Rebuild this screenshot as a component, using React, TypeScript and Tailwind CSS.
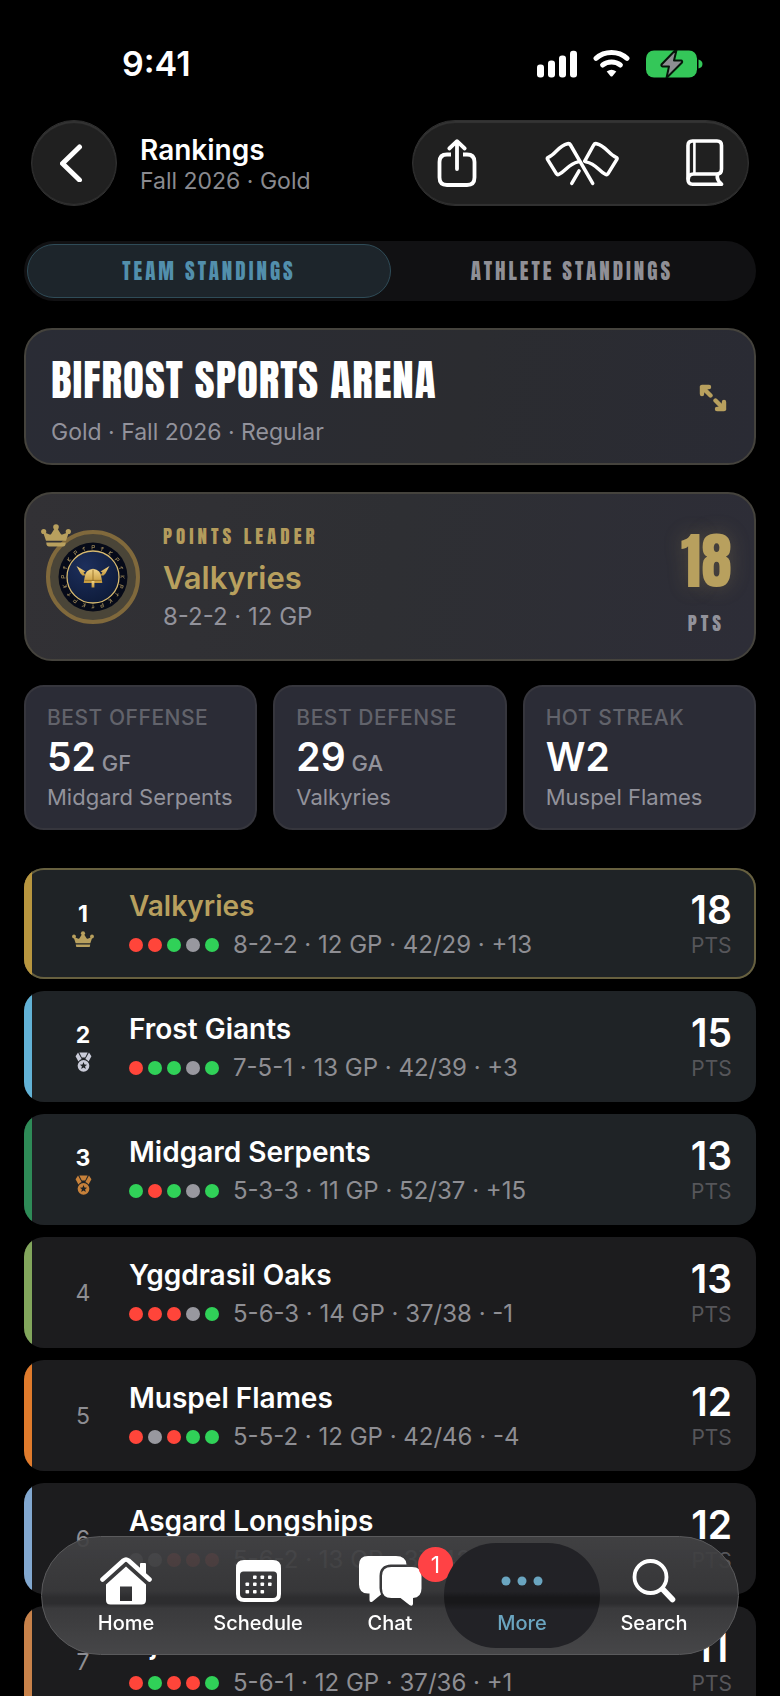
import type { ReactNode } from "react";

type Result = "W" | "L" | "T";

type Team = {
  rank: number;
  name: string;
  form: Result[];
  record: string;
  points: number;
  strip: string;
};

const teams: Team[] = [
  { rank: 1, name: "Valkyries", form: ["L", "L", "W", "T", "W"], record: "8-2-2 · 12 GP · 42/29 · +13", points: 18, strip: "bg-[#b8963f]" },
  { rank: 2, name: "Frost Giants", form: ["L", "W", "W", "T", "W"], record: "7-5-1 · 13 GP · 42/39 · +3", points: 15, strip: "bg-[#62b2d6]" },
  { rank: 3, name: "Midgard Serpents", form: ["W", "L", "W", "T", "W"], record: "5-3-3 · 11 GP · 52/37 · +15", points: 13, strip: "bg-[#2e8b57]" },
  { rank: 4, name: "Yggdrasil Oaks", form: ["L", "L", "L", "T", "W"], record: "5-6-3 · 14 GP · 37/38 · -1", points: 13, strip: "bg-[#82a65c]" },
  { rank: 5, name: "Muspel Flames", form: ["L", "T", "L", "W", "W"], record: "5-5-2 · 12 GP · 42/46 · -4", points: 12, strip: "bg-[#e07b2c]" },
  { rank: 6, name: "Asgard Longships", form: ["T", "T", "L", "L", "L"], record: "5-6-2 · 13 GP · 37/42 · -5", points: 12, strip: "bg-[#82a8d0]" },
  { rank: 7, name: "Njord Raiders", form: ["L", "W", "L", "L", "W"], record: "5-6-1 · 12 GP · 37/36 · +1", points: 11, strip: "bg-[#c8824a]" },
];

const stats = [
  { label: "BEST OFFENSE", value: "52", unit: "GF", team: "Midgard Serpents" },
  { label: "BEST DEFENSE", value: "29", unit: "GA", team: "Valkyries" },
  { label: "HOT STREAK", value: "W2", unit: "", team: "Muspel Flames" },
];

const resultColor: Record<Result, string> = {
  W: "bg-[#30d158]",
  L: "bg-[#ff453a]",
  T: "bg-[#98989f]",
};

function Crown({ className }: { className: string }) {
  return (
    <svg viewBox="0 0 30 23" className={className} fill="currentColor" aria-hidden="true">
      <circle cx="15" cy="3" r="2.8" />
      <circle cx="2.7" cy="7.5" r="2.6" />
      <circle cx="27.3" cy="7.5" r="2.6" />
      <path d="M2 8 L8.6 10.5 Q9.6 10.9 10.2 10 L13.6 4.5 H16.4 L19.8 10 Q20.4 10.9 21.4 10.5 L28 8 L25 16.8 H5 Z" />
      <path d="M5.2 18.4 H24.8 L24.4 20.8 Q24 22.6 22.2 22.6 H7.8 Q6 22.6 5.6 20.8 Z" />
    </svg>
  );
}

function Medal({ className }: { className: string }) {
  return (
    <svg viewBox="0 0 18 21" className={className} aria-hidden="true">
      <path d="M0.6 4.4 L3.2 0.6 L7 7.4 Q5 8.4 3.6 10 Z" fill="currentColor" />
      <path d="M17.4 4.4 L14.8 0.6 L11 7.4 Q13 8.4 14.4 10 Z" fill="currentColor" />
      <path d="M4.6 0.4 H13.4 L10.8 5.8 H7.2 Z" fill="currentColor" />
      <circle cx="9" cy="14.6" r="6.2" fill="currentColor" />
      <path d="M9 10.6 L10.1 13.2 L12.8 13.4 L10.7 15.2 L11.4 17.9 L9 16.4 L6.6 17.9 L7.3 15.2 L5.2 13.4 L7.9 13.2 Z" fill="#1f2326" />
    </svg>
  );
}

function TeamCrest() {
  const ticks = Array.from({ length: 20 }, (_, i) => i * 18);
  return (
    <svg viewBox="0 0 94 94" className="size-[94px]" role="img" aria-label="Valkyries crest">
      <defs>
        <linearGradient id="helm" x1="0" y1="0" x2="0" y2="1">
          <stop offset="0" stopColor="#f3d589" />
          <stop offset="1" stopColor="#c4983c" />
        </linearGradient>
        <radialGradient id="night" cx="0.35" cy="0.3" r="0.8">
          <stop offset="0" stopColor="#1d2f5c" />
          <stop offset="1" stopColor="#0d1a38" />
        </radialGradient>
      </defs>
      <circle cx="47" cy="47" r="45" fill="#4a4538" stroke="#80693c" strokeWidth="4" />
      <circle cx="47" cy="47" r="34.5" fill="#060a18" />
      <circle cx="47" cy="47" r="26" fill="url(#night)" stroke="#d9bb70" strokeWidth="1.3" />
      {ticks.map((angle, i) => (
        <path
          key={angle}
          d={i % 3 === 0 ? "M46 15.5 V19.5 M46 15.5 H48.5 V17.5 H46" : i % 3 === 1 ? "M47 15.5 V19.5 M45.5 17 L48.5 16" : "M46 15.5 V19.5 M48.5 15.5 L46 17.5 L48 19.5"}
          transform={`rotate(${angle} 47 47)`}
          stroke="#8f7c52"
          strokeWidth="0.8"
          fill="none"
        />
      ))}
      <g fill="url(#helm)">
        <path d="M38.5 48 Q39 39.6 47 38.8 Q55 39.6 55.5 48 L56.3 53 H37.7 Z" />
        <path d="M30.5 36 L39.5 41.5 L37.5 42.5 L39.5 45.5 L36.5 45.5 L34.5 43.5 Z" />
        <path d="M63.5 36 L54.5 41.5 L56.5 42.5 L54.5 45.5 L57.5 45.5 L59.5 43.5 Z" />
        <path d="M45.6 51 H48.4 V57.5 H45.6 Z" />
      </g>
      <path d="M47 39.5 V51 M38.4 50.4 H55.6" stroke="#8f6b25" strokeWidth="0.8" />
    </svg>
  );
}

function StatusBar() {
  return (
    <div className="flex items-center justify-between pt-[42px] pr-[77px] pb-[34px] pl-[122px]">
      <span className="text-[34px] leading-[44px] font-semibold">9:41</span>
      <div className="flex items-center gap-4">
        <svg width="40" height="28" viewBox="0 0 40 28" fill="#fff" aria-label="Signal" role="img">
          <rect x="0" y="14.5" width="7" height="13" rx="3" />
          <rect x="11" y="10.5" width="7" height="17" rx="3" />
          <rect x="22" y="5.5" width="7" height="22" rx="3" />
          <rect x="33" y="0.8" width="7" height="26.7" rx="3" />
        </svg>
        <svg width="37" height="28" viewBox="0 0 37 28" fill="none" stroke="#fff" strokeWidth="5" strokeLinecap="round" aria-label="Wi-Fi" role="img">
          <path d="M3 8.4 Q9.5 2.6 18.5 2.6 Q27.5 2.6 34 8.4" />
          <path d="M9.6 15 Q13.4 12 18.5 12 Q23.6 12 27.4 15" />
          <path d="M13.7 21.6 Q18.5 18 23.3 21.6 L19.6 26 Q18.5 27 17.4 26 Z" fill="#fff" stroke="none" />
        </svg>
        <svg width="57" height="28" viewBox="0 0 57 28" aria-label="Battery charging" role="img">
          <rect x="0" y="0.5" width="51" height="27" rx="8" fill="#34c759" />
          <path d="M52.5 9.5 Q56.5 10.5 56.5 14 Q56.5 17.5 52.5 18.5 Z" fill="#34c759" />
          <path d="M29.5 0 L15.5 14.5 Q15 16.2 16.6 16.4 H23 L20.5 28 L36 12.5 Q36.6 10.8 35 10.6 H28 L30.5 0 Z" fill="#8e8e93" stroke="#06160a" strokeWidth="2" strokeLinejoin="round" />
        </svg>
      </div>
    </div>
  );
}

function Header() {
  const glass = "border border-[#303030] bg-[#202020] shadow-[inset_0_2px_1px_#343434,inset_0_-1px_1px_#333]";
  return (
    <header className="flex items-center justify-between px-[7px]">
      <div className="flex items-center gap-[23px]">
        <button type="button" aria-label="Back" className={`flex size-[86px] items-center justify-center rounded-full pr-1 ${glass}`}>
          <svg width="24" height="38" viewBox="0 0 24 38" fill="none" stroke="#fff" strokeWidth="5" strokeLinecap="round" strokeLinejoin="round">
            <path d="M19.5 3 L2.5 19.5 L19.5 36" />
          </svg>
        </button>
        <div className="pt-1">
          <h1 className="text-[28px] leading-8 font-semibold">Rankings</h1>
          <p className="text-[23px] leading-[30px] text-[#8a8a8f]">Fall 2026 · Gold</p>
        </div>
      </div>
      <div className={`flex h-[86px] w-[337px] items-center justify-between rounded-full px-[24px] ${glass}`}>
        <button type="button" aria-label="Share">
          <svg width="40" height="50" viewBox="0 0 40 50" fill="none" stroke="#fff" strokeWidth="3.8" strokeLinecap="round" strokeLinejoin="round">
            <path d="M14 16.5 H10 Q2.5 16.5 2.5 24 V39.5 Q2.5 47 10 47 H30 Q37.5 47 37.5 39.5 V24 Q37.5 16.5 30 16.5 H26" strokeLinecap="butt" />
            <path d="M20 31 V3.5 M12.3 10.5 L20 3.2 L27.7 10.5" />
          </svg>
        </button>
        <button type="button" aria-label="Teams">
          <svg width="74" height="45" viewBox="0 0 76 46" fill="none" stroke="#fff" strokeWidth="3.6" strokeLinecap="round" strokeLinejoin="round">
            <path d="M49 43.5 L26.2 4 Q25.2 2.2 23.2 2.7 C13.5 5 11 13.5 3.4 16.6 Q1.8 17.4 2.6 18.8 L11.8 33.6 Q12.8 35 14.4 34 C22 30.4 24 23.5 34 21.3" />
            <path d="M27.5 43.5 L35 30.6" />
            <path d="M40.8 20.6 L50 4 Q51 2.2 53 2.7 C62.5 5 65.5 13.5 73 16.6 Q74.6 17.4 73.8 18.8 L64.6 33.6 Q63.6 35 62 34 C54.5 30.4 53 23.5 42 21.3" />
          </svg>
        </button>
        <button type="button" aria-label="Rules">
          <svg width="38" height="48" viewBox="0 0 38 48" fill="none" stroke="#fff" strokeWidth="3.6" strokeLinecap="round" strokeLinejoin="round">
            <path d="M35.5 45.2 H6.5 Q2 45.2 2 40.5 V6.5 Q2 2 6.5 2 H31 Q35.5 2 35.5 6.5 V30 Q35.5 34.5 32 35 Q29.5 40 35.5 45.2" />
            <path d="M8.4 3 V34" strokeWidth="2.6" />
            <path d="M2.4 39.5 Q2.6 35 7.5 35 H32" />
          </svg>
        </button>
      </div>
    </header>
  );
}

function RankMark({ rank }: { rank: number }) {
  if (rank > 3) {
    return <span className="text-[23px] leading-7 text-[#8e8e93]">{rank}</span>;
  }
  return (
    <>
      <span className="text-[23px] leading-7 font-bold">{rank}</span>
      {rank === 1 && <Crown className="mt-[3px] w-[22px] text-[#b8a05e]" />}
      {rank === 2 && <Medal className="mt-[3px] w-[17px] text-[#c9cbd8]" />}
      {rank === 3 && <Medal className="mt-[3px] w-[17px] text-[#c7813a]" />}
    </>
  );
}

function TeamRow({ team }: { team: Team }) {
  const surface =
    team.rank === 1
      ? "bg-[#1f2326] ring-2 ring-inset ring-[#67603f]"
      : team.rank <= 3
        ? "bg-[#1f2326]"
        : "bg-[#1c1c1e]";
  return (
    <li className={`flex h-[111px] shrink-0 overflow-hidden rounded-[20px] ${surface}`}>
      <div className={`w-2 shrink-0 ${team.strip}`} />
      <div className="flex w-[102px] shrink-0 flex-col items-center justify-center">
        <RankMark rank={team.rank} />
      </div>
      <div className="-ml-[5px] min-w-0 flex-1 pt-5">
        <h3 className={`text-[28px] leading-9 font-semibold ${team.rank === 1 ? "text-[#b8a05e]" : ""}`}>{team.name}</h3>
        <div className="mt-1 flex items-center">
          <div className="flex gap-[5px]">
            {team.form.map((result, i) => (
              <span key={i} className={`size-[14px] rounded-full ${resultColor[result]}`} />
            ))}
          </div>
          <p className="ml-[14px] text-2xl leading-[34px] text-[#8e8e93]">{team.record}</p>
        </div>
      </div>
      <div className="flex flex-col items-center pt-5 pr-6">
        <span className="text-[39px] leading-[44px] font-semibold">{team.points}</span>
        <span className="text-[21px] leading-7 text-[#56565a]">PTS</span>
      </div>
    </li>
  );
}

function Tab({ label, active, badge, children }: { label: string; active?: boolean; badge?: number; children: ReactNode }) {
  return (
    <button
      type="button"
      aria-current={active ? "page" : undefined}
      className={`relative flex h-[105px] flex-1 flex-col items-center justify-end pb-[13px] ${active ? "text-[#6aa5c0]" : "text-white"}`}
    >
      {active && <span className="absolute -inset-x-3 inset-y-0 rounded-[52px] bg-[linear-gradient(#222226_46%,#18181a_52%,#18181a_57%,#222226_64%)]" />}
      <span className="relative flex h-12 items-center justify-center">{children}</span>
      <span className="relative mt-[6px] text-xl leading-6 font-medium">{label}</span>
      {badge && (
        <span className="absolute top-1 left-[94px] flex size-[35px] items-center justify-center rounded-full bg-[#ff4245] text-[23px] leading-7">
          {badge}
        </span>
      )}
    </button>
  );
}

function TabBar() {
  return (
    <nav className="fixed inset-x-[41px] bottom-[41px] flex items-center rounded-full border border-[#5a5a5c] bg-[linear-gradient(#434345ec_0%,#39393bf2_46%,#2d2d2f_52%,#2d2d2f_57%,#3a3a3c_61%,#464648_100%)] px-[18px] py-[6px]">
      <Tab label="Home">
        <svg width="54" height="48" viewBox="0 0 54 48" fill="currentColor">
          <path d="M3.5 22.5 L24.5 3.5 Q27 1.5 29.5 3.5 L50.5 22.5" fill="none" stroke="currentColor" strokeWidth="4.6" strokeLinecap="round" strokeLinejoin="round" />
          <path d="M41 7 Q41 6 42 6 H46 Q47 6 47 7 V18 L41 12.5 Z" />
          <path d="M27 9.5 L47 27.5 V43 Q47 47.5 42.5 47.5 H11.5 Q7 47.5 7 43 V27.5 Z M21 29.5 V44 H33 V29.5 Z" fillRule="evenodd" />
        </svg>
      </Tab>
      <Tab label="Schedule">
        <svg width="45" height="42" viewBox="0 0 45 42" fill="currentColor">
          <path d="M8 0 H37 Q45 0 45 8 V34 Q45 42 37 42 H8 Q0 42 0 34 V8 Q0 0 8 0 Z M7.5 11.5 Q4 11.5 4 15 V34 Q4 38 8 38 H37 Q41 38 41 34 V15 Q41 11.5 37.5 11.5 Z" fillRule="evenodd" />
          {[
            [17, 15.5], [24.5, 15.5], [32, 15.5],
            [9.5, 22.5], [17, 22.5], [24.5, 22.5], [32, 22.5],
            [9.5, 30], [17, 30], [24.5, 30],
          ].map(([x, y]) => (
            <rect key={`${x}-${y}`} x={x} y={y} width="3.6" height="3.6" rx="0.8" />
          ))}
        </svg>
      </Tab>
      <Tab label="Chat" badge={1}>
        <svg width="64" height="52" viewBox="0 0 64 52" fill="currentColor">
          <path d="M10 1 H38 Q48 1 48.5 9.5 H33 Q21.5 10 21.5 21 V33 Q21.5 36 23 39.5 L14.5 46.5 Q11.5 48 11.5 45 V38.5 H10 Q1 38.5 1 29.5 V10 Q1 1 10 1 Z" />
          <path d="M33.5 12 H54 Q63.5 12 63.5 21 V33.5 Q63.5 42.5 55 43 V49 Q54.5 52 51.5 50 L42.5 43 H33.5 Q24 43 24 33.5 V21 Q24 12 33.5 12 Z" />
        </svg>
      </Tab>
      <Tab label="More" active>
        <svg width="42" height="10" viewBox="0 0 42 10" fill="currentColor">
          <circle cx="5" cy="5" r="4.5" />
          <circle cx="21" cy="5" r="4.5" />
          <circle cx="37" cy="5" r="4.5" />
        </svg>
      </Tab>
      <Tab label="Search">
        <svg width="44" height="46" viewBox="0 0 44 46" fill="none" stroke="currentColor" strokeLinecap="round">
          <circle cx="18.5" cy="19" r="16" strokeWidth="3.8" />
          <path d="M31 31.5 L40.5 41.5" strokeWidth="5.6" />
        </svg>
      </Tab>
    </nav>
  );
}

export default function App() {
  return (
    <div className="h-screen overflow-hidden bg-black font-['Inter',sans-serif] text-white">
      <StatusBar />
      <main className="px-6">
        <Header />

        <div role="tablist" className="mt-[35px] flex rounded-full bg-[#111113] p-[3px] font-['Anton','Roboto_Condensed',sans-serif] text-[21px] leading-[52px] tracking-[3px]">
          <button type="button" role="tab" aria-selected="true" className="flex-1 rounded-full border border-[#2f4c58] bg-[#1d252b] text-[#528fac]">
            TEAM STANDINGS
          </button>
          <button type="button" role="tab" aria-selected="false" className="flex-1 text-[#8f8f96]">
            ATHLETE STANDINGS
          </button>
        </div>

        <section className="mt-[27px] flex items-center justify-between rounded-[28px] border-2 border-[#45433d] bg-[linear-gradient(100deg,#2a2c35,#2b2c30_60%,#2a2b34)] px-[25px] pt-[18px] pb-[15px]">
          <div>
            <h2 className="font-['Anton','Roboto_Condensed',sans-serif] text-[43px] leading-[64px] tracking-[1px]">BIFROST SPORTS ARENA</h2>
            <p className="mt-1 text-[23px] leading-8 text-[#92929b]">Gold · Fall 2026 · Regular</p>
          </div>
          <button type="button" aria-label="Expand" className="mr-[2px]">
            <svg width="28" height="28" viewBox="0 0 28 28" fill="none" stroke="#b8a05e" strokeWidth="4.4" strokeLinecap="round" strokeLinejoin="round">
              <path d="M11.5 11.5 L3 3 M3 10 V3 H10" />
              <path d="M16.5 16.5 L25 25 M25 18 V25 H18" />
            </svg>
          </button>
        </section>

        <section className="mt-[27px] flex h-[169px] items-center rounded-[28px] border-2 border-[#45433d] bg-[linear-gradient(100deg,#323135,#2e2f33_50%,#2d2d37)] pr-[22px] pl-5">
          <div className="relative">
            <TeamCrest />
            <Crown className="absolute -top-[6px] -left-[5px] w-[30px] text-[#b8a05e]" />
          </div>
          <div className="ml-[23px] flex-1">
            <p className="font-['Anton','Roboto_Condensed',sans-serif] text-[19px] leading-8 tracking-[4px] text-[#b49c5c]">POINTS LEADER</p>
            <p className="mt-[6px] text-[31px] leading-10 font-semibold text-[#b8a05e]">Valkyries</p>
            <p className="mt-[3px] text-2xl leading-8 text-[#92929b]">8-2-2 · 12 GP</p>
          </div>
          <div className="pt-[10px] text-center font-['Anton','Roboto_Condensed',sans-serif]">
            <p className="text-[62px] leading-[72px] text-[#b8a05e] [text-shadow:0_0_20px_#b8a05e40]">18</p>
            <p className="mt-[11px] text-[19px] leading-[30px] tracking-[4px] text-[#92929b]">PTS</p>
          </div>
        </section>

        <section className="mt-6 grid grid-cols-3 gap-4">
          {stats.map((stat) => (
            <div key={stat.label} className="rounded-[20px] border-2 border-[#36363d] bg-[#2b2c36] px-[21px] pt-[17px] pb-4">
              <p className="text-[21px] leading-7 font-medium tracking-wide whitespace-nowrap text-[#62636b]">{stat.label}</p>
              <p className="flex items-baseline gap-[6px] text-[39px] leading-[50px] font-semibold">
                {stat.value}
                {stat.unit && <span className="text-[22px] leading-7 font-medium text-[#92929b]">{stat.unit}</span>}
              </p>
              <p className="text-[22px] leading-[30px] whitespace-nowrap text-[#92929b]">{stat.team}</p>
            </div>
          ))}
        </section>

        <ol className="mt-[38px] flex flex-col gap-3">
          {teams.map((team) => (
            <TeamRow key={team.rank} team={team} />
          ))}
        </ol>
      </main>
      <TabBar />
    </div>
  );
}
